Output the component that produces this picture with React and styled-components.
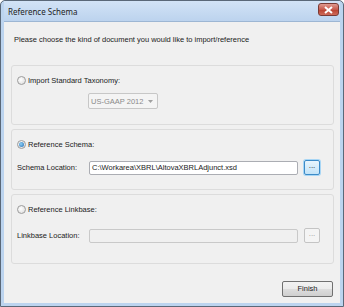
import styled, { createGlobalStyle } from "styled-components";

const GlobalStyle = createGlobalStyle`
  html, body {
    margin: 0;
    padding: 0;
    background: #ffffff;
  }
  * {
    box-sizing: border-box;
  }
`

function Radio({ checked }) {
    return (
        <RadioCircle>
            {checked && <RadioDot/>}
        </RadioCircle>
    )
}

function App() {
    return (
        <>
            <GlobalStyle/>
            <Window>
                <TitleBar>
                    <Title>Reference Schema</Title>
                    <CloseButton>
                        <svg width="9" height="8" viewBox="0 0 9 8">
                            <path d="M1 1 L8 7 M8 1 L1 7" stroke="#ffffff" strokeWidth="2"/>
                        </svg>
                    </CloseButton>
                </TitleBar>
                <Client>
                    <Prompt>Please choose the kind of document you would like to import/reference</Prompt>

                    <GroupBox $height={60} $top={20}>
                        <RadioRow>
                            <Radio/>
                            <Label>Import Standard Taxonomy:</Label>
                        </RadioRow>
                        <ComboRow>
                            <Combo>
                                US-GAAP 2012
                                <svg width="5" height="3" viewBox="0 0 5 3">
                                    <path d="M0 0 L5 0 L2.5 3 Z" fill="#a0a0a0"/>
                                </svg>
                            </Combo>
                        </ComboRow>
                    </GroupBox>

                    <GroupBox $height={61} $top={4}>
                        <RadioRow>
                            <Radio checked/>
                            <Label>Reference Schema:</Label>
                        </RadioRow>
                        <FieldRow>
                            <FieldLabel>Schema Location:</FieldLabel>
                            <TextField>C:\Workarea\XBRL\AltovaXBRLAdjunct.xsd</TextField>
                            <BrowseButton $active>...</BrowseButton>
                        </FieldRow>
                    </GroupBox>

                    <GroupBox $height={70} $top={4}>
                        <RadioRow>
                            <Radio/>
                            <Label>Reference Linkbase:</Label>
                        </RadioRow>
                        <FieldRow $gap={14}>
                            <FieldLabel>Linkbase Location:</FieldLabel>
                            <TextField $disabled/>
                            <BrowseButton>...</BrowseButton>
                        </FieldRow>
                    </GroupBox>

                    <Footer>
                        <Button>Finish</Button>
                    </Footer>
                </Client>
            </Window>
        </>
    )
}

const Window = styled.div`
  width: 344px;
  height: 307px;
  display: flex;
  flex-direction: column;
  background: #bcd4ef;
  border: 1px solid #5a6878;
  border-radius: 5px 5px 0 0;
  padding: 0 3px 3px 3px;
  font-family: "Liberation Sans", Arial, sans-serif;
  color: #1b1b1b;
`

const TitleBar = styled.div`
  height: 20px;
  display: flex;
  align-items: center;
  justify-content: space-between;
  padding-left: 4px;
  padding-right: 1px;
  background: linear-gradient(#d2e3f6, #bcd3ee);
`

const Title = styled.span`
  font-family: "Noto Sans", "Liberation Sans", sans-serif;
  font-size: 8px;
  color: #1e1e1e;
`

const CloseButton = styled.div`
  width: 21px;
  height: 13px;
  margin-top: -3px;
  display: flex;
  align-items: center;
  justify-content: center;
  border: 1px solid #7a3a34;
  border-radius: 3px;
  background: linear-gradient(#e09a90, #c75a4c 50%, #b8402f 51%, #cf6a58);
`

const Client = styled.div`
  flex: 1;
  display: flex;
  flex-direction: column;
  background: #f0f0f0;
  border-top: 1px solid #9db6d3;
  padding: 13px 6px 0 7px;
`

const Prompt = styled.div`
  font-size: 7.5px;
  line-height: 10px;
  padding-left: 3px;
`

const GroupBox = styled.div`
  height: ${p => p.$height}px;
  margin-top: ${p => p.$top}px;
  border: 1px solid #dcdcdc;
  border-radius: 3px;
  padding: 9px 0 0 5px;
  display: flex;
  flex-direction: column;
`

const RadioRow = styled.div`
  display: flex;
  align-items: center;
  gap: 2px;
  height: 10px;
`

const RadioCircle = styled.div`
  width: 9px;
  height: 9px;
  border-radius: 50%;
  border: 1px solid #9c9c9c;
  background: radial-gradient(circle at 40% 40%, #ffffff, #d8d8d8);
  display: flex;
  align-items: center;
  justify-content: center;
`

const RadioDot = styled.div`
  width: 5px;
  height: 5px;
  border-radius: 50%;
  background: radial-gradient(circle at 40% 40%, #8fd0f5, #1f6ab3);
`

const Label = styled.span`
  font-size: 7.5px;
`

const ComboRow = styled.div`
  margin-top: 8px;
  padding-left: 71px;
`

const Combo = styled.div`
  width: 70px;
  height: 16px;
  border: 1px solid #c7c7c7;
  border-radius: 2px;
  background: #f4f4f4;
  display: flex;
  align-items: center;
  justify-content: space-between;
  padding: 0 4px 0 2px;
  font-size: 7.5px;
  color: #8a8a8a;
`

const FieldRow = styled.div`
  display: flex;
  align-items: center;
  margin-top: ${p => p.$gap || 11}px;
`

const FieldLabel = styled.span`
  width: 72px;
  font-size: 7.5px;
`

const TextField = styled.div`
  width: 209px;
  height: 14px;
  border: 1px solid ${p => p.$disabled ? "#c9c9c9" : "#abadb3"};
  border-radius: 2px;
  background: ${p => p.$disabled ? "#f0f0f0" : "#ffffff"};
  font-size: 7.5px;
  line-height: 12px;
  padding-left: 2px;
`

const BrowseButton = styled.div`
  width: 16px;
  height: 15px;
  margin-left: 6px;
  border: 1px solid ${p => p.$active ? "#3c8bc8" : "#c4c4c4"};
  border-radius: 2px;
  background: ${p => p.$active ? "linear-gradient(#e8f5fd, #c2e3f8)" : "#f4f4f4"};
  box-shadow: ${p => p.$active ? "0 0 0 1px #a8d6f5" : "none"};
  font-size: 8px;
  line-height: 10px;
  text-align: center;
  color: ${p => p.$active ? "#1b1b1b" : "#9a9a9a"};
`

const Footer = styled.div`
  display: flex;
  justify-content: flex-end;
  margin-top: 17px;
  padding-right: 1px;
`

const Button = styled.div`
  width: 51px;
  height: 16px;
  border: 1px solid #707070;
  border-radius: 2px;
  background: linear-gradient(#f2f2f2, #ebebeb 50%, #dddddd 51%, #cfcfcf);
  font-size: 7.5px;
  line-height: 14px;
  text-align: center;
`

export default App;
